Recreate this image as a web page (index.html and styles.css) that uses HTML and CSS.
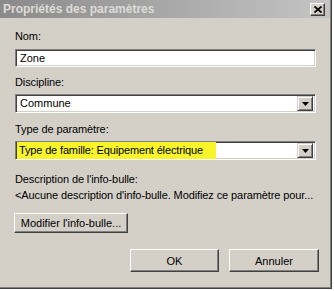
FILE: index.html
```html
<!DOCTYPE html>
<html lang="fr">
<head>
<meta charset="utf-8">
<title>Propriétés des paramètres</title>
<link rel="stylesheet" href="styles.css">
</head>
<body>
<div class="dialog">
  <div class="titlebar">
    <span class="title">Propriétés des paramètres</span>
    <span class="close"><svg width="8" height="7" viewBox="0 0 8 7"><path d="M0.5 0.5 L7.5 6.5 M7.5 0.5 L0.5 6.5" stroke="#000" stroke-width="1.8" fill="none"/></svg></span>
  </div>
  <div class="content">
    <div class="lbl lbl-first">Nom:</div>
    <div class="field textbox"><span class="val">Zone</span></div>
    <div class="lbl lbl-2">Discipline:</div>
    <div class="field combo"><span class="val">Commune</span><span class="arrow"><svg width="7" height="4" viewBox="0 0 7 4"><path d="M0 0 H7 L3.5 4 Z" fill="#000"/></svg></span></div>
    <div class="lbl lbl-3">Type de paramètre:</div>
    <div class="field combo"><span class="val hl">Type de famille: Equipement électrique</span><span class="arrow"><svg width="7" height="4" viewBox="0 0 7 4"><path d="M0 0 H7 L3.5 4 Z" fill="#000"/></svg></span></div>
    <div class="lbl lbl-4">Description de l'info-bulle:</div>
    <div class="desc">&lt;Aucune description d'info-bulle. Modifiez ce paramètre pour...</div>
    <button class="btn btn-mod">Modifier l'info-bulle...</button>
    <div class="actions">
      <button class="btn btn-ok">OK</button>
      <button class="btn btn-cancel">Annuler</button>
    </div>
  </div>
</div>
</body>
</html>
```
FILE: styles.css
```css
* { box-sizing: border-box; }
html, body { margin: 0; padding: 0; background: #ffffff; }
body {
  font-family: "Liberation Sans", Arial, sans-serif;
  font-size: 11px;
  color: #000;
}
.dialog {
  width: 332px;
  height: 289px;
  background: #d4d0c8;
  border-right: 1px solid #404040;
  border-bottom: 1px solid #404040;
  box-shadow: inset -1px -1px 0 #808080;
}
.titlebar {
  height: 18px;
  width: 330px;
  background: linear-gradient(to right, #8a8a8a 0%, #a8a8a8 50%, #c4c4c4 100%);
  display: flex;
  align-items: center;
  justify-content: space-between;
  padding: 0 5px 0 3px;
}
.title {
  font-weight: bold;
  font-size: 12px;
  color: #dedbd6;
}
.close {
  width: 15px;
  height: 13px;
  background: #d4d0c8;
  border-top: 1px solid #fff;
  border-left: 1px solid #fff;
  border-right: 1px solid #404040;
  border-bottom: 1px solid #404040;
  box-shadow: inset -1px -1px 0 #808080;
  display: flex;
  align-items: center;
  justify-content: center;
  margin-top: 1px;
}
.close svg { display: block; }
.content {
  padding: 0 12px 0 15px;
}
.lbl { line-height: 13px; height: 13px; letter-spacing: -0.1px; }
.lbl-first { margin-top: 12px; }
.lbl-2 { margin-top: 9px; }
.lbl-3 { margin-top: 10px; }
.lbl-4 { margin-top: 13px; }
.field {
  width: 301px;
  background: #fff;
  border-top: 1px solid #808080;
  border-left: 1px solid #808080;
  border-right: 1px solid #fff;
  border-bottom: 1px solid #fff;
  box-shadow: inset 1px 1px 0 #404040, inset -1px -1px 0 #d4d0c8;
  display: flex;
  align-items: center;
}
.textbox { height: 18px; margin-top: 6px; padding-left: 4px; }
.combo { height: 19px; margin-top: 5px; padding: 0 2px 0 2px; justify-content: space-between; }
.val { line-height: 13px; }
.combo .val { padding-left: 2px; }
.hl {
  background: #f7f52a;
  align-self: stretch;
  display: flex;
  align-items: center;
  width: 199px;
  margin-left: -1px;
  padding-left: 3px;
  letter-spacing: -0.15px;
  white-space: nowrap;
}
.arrow {
  width: 16px;
  height: 15px;
  background: #d4d0c8;
  border-top: 1px solid #d4d0c8;
  border-left: 1px solid #d4d0c8;
  border-right: 1px solid #404040;
  border-bottom: 1px solid #404040;
  box-shadow: inset 1px 1px 0 #fff, inset -1px -1px 0 #808080;
  display: flex;
  align-items: center;
  justify-content: center;
}
.arrow svg { display: block; }
.desc {
  margin-top: 3px;
  line-height: 13px;
  white-space: nowrap;
  letter-spacing: -0.1px;
}
.btn {
  font-family: "Liberation Sans", Arial, sans-serif;
  font-size: 11px;
  color: #000;
  background: #d4d0c8;
  border-top: 1px solid #fff;
  border-left: 1px solid #fff;
  border-right: 1px solid #404040;
  border-bottom: 1px solid #404040;
  box-shadow: inset -1px -1px 0 #808080;
  padding: 0;
  margin: 0;
  display: block;
}
.btn-mod {
  margin-top: 11px;
  margin-left: -1px;
  width: 114px;
  height: 20px;
}
.actions {
  margin-top: 16px;
  display: flex;
  justify-content: flex-end;
  gap: 10px;
}
.btn-ok { width: 89px; height: 23px; }
.btn-cancel { width: 90px; height: 23px; }
```
